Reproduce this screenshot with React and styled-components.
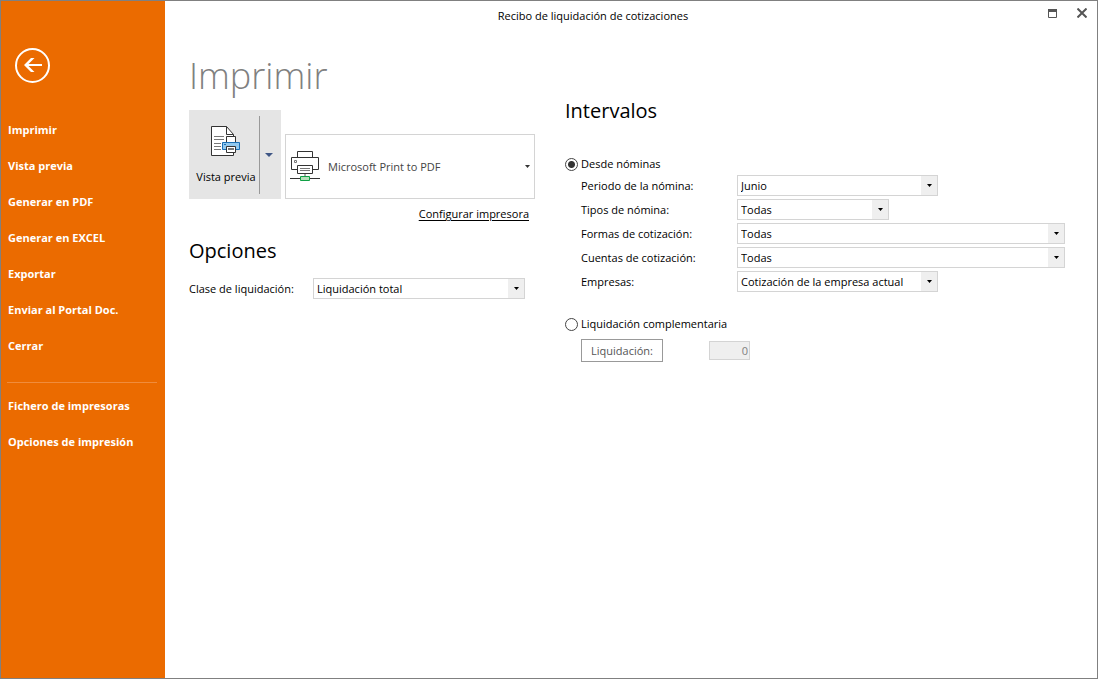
import React, { useState } from 'react';
import styled, { createGlobalStyle } from 'styled-components';

const GlobalStyle = createGlobalStyle`
  * {
    box-sizing: border-box;
  }

  body {
    margin: 0;
    background-color: #ffffff;
  }

  body, button, input, select {
    font-family: 'Open Sans', 'Noto Sans', sans-serif;
    font-size: 11px;
    line-height: 16px;
    color: #000000;
  }
`;

const Window = styled.div`
  display: flex;
  min-height: 100vh;
  border: 1px solid #808080;
`;

const Sidebar = styled.nav`
  flex: 0 0 164px;
  display: flex;
  flex-direction: column;
  align-items: stretch;
  padding: 47px 8px 0 6px;
  background-color: #eb6b00;
`;

const BackButton = styled.button`
  width: 36px;
  height: 36px;
  margin: 0 0 28px 8px;
  padding: 0;
  border: none;
  background: none;
  cursor: pointer;

  svg {
    display: block;
  }
`;

const MenuItem = styled.button`
  height: 36px;
  padding: 0 1px;
  border: none;
  background: none;
  color: #ffffff;
  font-weight: 700;
  text-align: left;
  white-space: nowrap;
  cursor: pointer;
`;

const MenuDivider = styled.hr`
  width: 100%;
  margin: 18px 0 5px;
  border: none;
  border-top: 1px solid #f08c3c;
`;

const Main = styled.div`
  flex: 1;
  min-width: 0;
  display: flex;
  flex-direction: column;
`;

const TitleBar = styled.header`
  display: grid;
  grid-template-columns: 1fr 76px;
  align-items: center;
  height: 28px;
`;

const WindowTitle = styled.div`
  padding: 2px 0 0;
  text-align: center;
`;

const WindowActions = styled.div`
  display: flex;
  justify-content: flex-end;
  gap: 10px;
  padding-right: 5px;
`;

const WindowButton = styled.button`
  display: flex;
  align-items: center;
  justify-content: center;
  width: 20px;
  height: 20px;
  padding: 0 0 4px;
  border: none;
  background: none;
`;

const Content = styled.main`
  display: grid;
  grid-template-columns: 346px minmax(0, 500px);
  gap: 30px;
  padding: 22px 24px;
`;

const Column = styled.section`
  padding-top: ${props => props.$offset || 0}px;
`;

const PageTitle = styled.h1`
  margin: 0 0 9px;
  color: #808080;
  font-size: 36px;
  font-weight: 300;
  line-height: 50px;
`;

const SectionTitle = styled.h2`
  margin: 0 0 ${props => props.$gap}px;
  font-size: 20px;
  font-weight: 400;
  line-height: 28px;
`;

const PrintTools = styled.div`
  display: flex;
  align-items: flex-end;
  gap: 4px;
`;

const PreviewGroup = styled.div`
  display: flex;
  align-items: center;
  width: 92px;
  height: 89px;
  background-color: #e5e5e5;
`;

const PreviewButton = styled.button`
  display: flex;
  flex-direction: column;
  align-items: center;
  justify-content: space-between;
  width: 71px;
  height: 78px;
  padding: 10px 0 9px 4px;
  border: none;
  border-right: 1px solid #999999;
  background: none;
  white-space: nowrap;
`;

const PreviewMenuButton = styled.button`
  flex: 1;
  display: flex;
  align-items: center;
  justify-content: center;
  height: 78px;
  padding: 0 4px 0 0;
  border: none;
  background: none;
`;

const PrinterBox = styled.div`
  flex: 1;
  display: flex;
  align-items: center;
  height: 65px;
  padding-left: 4px;
  border: 1px solid #d4d4d4;
`;

const PrinterSelectBox = styled.div`
  flex: 1;
  display: grid;
  align-items: center;

  svg {
    grid-area: 1 / 1;
    justify-self: end;
    margin-right: 4px;
    pointer-events: none;
  }
`;

const PrinterSelect = styled.select`
  grid-area: 1 / 1;
  appearance: none;
  height: 60px;
  padding: 0 20px 0 8px;
  border: none;
  background: none;
  color: #444444;
`;

const SetupLink = styled.a`
  display: block;
  width: max-content;
  margin: 7px 6px 15px auto;
  color: #000000;
  text-decoration: underline;
  text-underline-offset: 2px;
`;

const FieldRow = styled.div`
  display: grid;
  grid-template-columns: ${props => props.$labelWidth}px 1fr;
  align-items: center;
  margin-bottom: 3px;
`;

const SelectBox = styled.div`
  display: grid;
  width: ${props => props.$width || '100%'};
  height: 21px;
  border: 1px solid #d4d4d4;
`;

const Select = styled.select`
  grid-area: 1 / 1;
  appearance: none;
  width: 100%;
  padding: 0 20px 0 3px;
  border: none;
  border-radius: 0;
  background-color: #ffffff;
`;

const SelectArrow = styled.span`
  grid-area: 1 / 1;
  justify-self: end;
  display: flex;
  align-items: center;
  justify-content: center;
  width: 16px;
  background-color: #efefef;
  pointer-events: none;
`;

const RadioLabel = styled.label`
  display: flex;
  align-items: center;
  gap: 3px;
  height: 16px;
`;

const Radio = styled.input`
  appearance: none;
  width: 13px;
  height: 13px;
  margin: 0;
  border: 1px solid #444444;
  border-radius: 50%;

  &:checked {
    background: radial-gradient(circle, #333333 0 3px, #ffffff 4px);
  }
`;

const RadioFields = styled.div`
  padding: 3px 0 0 16px;
  margin-bottom: ${props => props.$gap || 0}px;
`;

const SettlementRow = styled.div`
  display: flex;
  align-items: center;
  gap: 46px;
  padding: 4px 0 0;
`;

const SettlementButton = styled.button`
  width: 82px;
  height: 23px;
  padding: 0;
  border: 1px solid #999999;
  background-color: #ffffff;
  color: #555555;
`;

const SettlementInput = styled.input`
  width: 41px;
  height: 19px;
  padding: 0 1px;
  border: 1px solid #d4d4d4;
  background-color: #efefef;
  color: #808080;
  text-align: right;
`;

const mainActions = [
  'Imprimir',
  'Vista previa',
  'Generar en PDF',
  'Generar en EXCEL',
  'Exportar',
  'Enviar al Portal Doc.',
  'Cerrar'
];

const setupActions = ['Fichero de impresoras', 'Opciones de impresión'];

const payrollFields = [
  { id: 'periodo', label: 'Periodo de la nómina:', value: 'Junio', width: '201px' },
  { id: 'tipos', label: 'Tipos de nómina:', value: 'Todas', width: '152px' },
  { id: 'formas', label: 'Formas de cotización:', value: 'Todas' },
  { id: 'cuentas', label: 'Cuentas de cotización:', value: 'Todas' },
  { id: 'empresas', label: 'Empresas:', value: 'Cotización de la empresa actual', width: '201px' }
];

const DownArrow = ({ color = '#000000', width = 5, height = 3 }) => (
  <svg width={width} height={height} viewBox={`0 0 ${width} ${height}`} aria-hidden="true">
    <path d={`M0 0H${width}L${width / 2} ${height}Z`} fill={color} />
  </svg>
);

const BackIcon = () => (
  <svg width="36" height="36" viewBox="0 0 36 36" fill="none" aria-hidden="true">
    <circle cx="17.5" cy="17.5" r="16.5" stroke="#ffffff" strokeWidth="2" />
    <path d="M9 17L16 10H19.5L13.5 16H27V18H13.5L19.5 24H16Z" fill="#ffffff" />
  </svg>
);

const PreviewIcon = () => (
  <svg width="30" height="31" viewBox="0 0 30 31" fill="none" aria-hidden="true">
    <path d="M0.5 0.5H15.5L22.5 8.5V29.5H0.5Z" fill="#ffffff" stroke="#333333" />
    <path d="M15.5 0.5V8.5H22.5" stroke="#333333" />
    <path d="M3 10.5H13M3 13.5H13M3 17.5H10M3 20.5H10M3 23.5H10" stroke="#777777" />
    <path d="M15.5 17V10.5H24.5V17" fill="#ffffff" stroke="#333333" />
    <path d="M11.5 16.5H28.5V23.5H11.5Z" fill="#92c9ef" stroke="#1a6fb5" />
    <path d="M13 18.5H15" stroke="#1a6fb5" />
    <path d="M15.5 20.5H24.5V26.5H15.5Z" fill="#ffffff" stroke="#333333" />
    <path d="M17 23H23" stroke="#777777" strokeWidth="2" />
  </svg>
);

const PrinterIcon = () => (
  <svg width="30" height="31" viewBox="0 0 30 31" fill="none" aria-hidden="true">
    <path d="M7.5 6V0.5H22.5V6" fill="#ffffff" stroke="#333333" />
    <path d="M7 18.5H1.5V6.5H28.5V18.5H23" stroke="#333333" />
    <path d="M4.5 9.5H6.5V11.5H4.5Z" stroke="#777777" />
    <path d="M7.5 14.5H22.5V22.5H7.5Z" fill="#ffffff" stroke="#333333" />
    <path d="M10 17.5H20M10 19.5H20" stroke="#777777" />
    <path d="M15 23V25" stroke="#aaaaaa" strokeWidth="2" />
    <path d="M0 27.5H30" stroke="#333333" />
    <path d="M10.5 25.5H19.5V29.5H10.5Z" fill="#b5dfb9" stroke="#10a045" />
  </svg>
);

const SelectField = ({ id, label, value, width, labelWidth }) => (
  <FieldRow $labelWidth={labelWidth}>
    <label htmlFor={id}>{label}</label>
    <SelectBox $width={width}>
      <Select id={id} defaultValue={value}>
        <option>{value}</option>
      </Select>
      <SelectArrow>
        <DownArrow />
      </SelectArrow>
    </SelectBox>
  </FieldRow>
);

const App = () => {
  const [range, setRange] = useState('nominas');

  return (
    <>
      <GlobalStyle />
      <Window>
        <Sidebar>
          <BackButton aria-label="Volver">
            <BackIcon />
          </BackButton>
          {mainActions.map(action => (
            <MenuItem key={action}>{action}</MenuItem>
          ))}
          <MenuDivider />
          {setupActions.map(action => (
            <MenuItem key={action}>{action}</MenuItem>
          ))}
        </Sidebar>

        <Main>
          <TitleBar>
            <WindowTitle>Recibo de liquidación de cotizaciones</WindowTitle>
            <WindowActions>
              <WindowButton aria-label="Maximizar">
                <svg width="9" height="9" viewBox="0 0 9 9" fill="none">
                  <path d="M0.5 0.5H8.5V8.5H0.5Z" stroke="#555555" />
                  <path d="M0 1.5H9" stroke="#555555" strokeWidth="3" />
                </svg>
              </WindowButton>
              <WindowButton aria-label="Cerrar ventana">
                <svg width="10" height="10" viewBox="0 0 10 10">
                  <path d="M0.5 0.5L9.5 9.5M9.5 0.5L0.5 9.5" stroke="#555555" strokeWidth="2" />
                </svg>
              </WindowButton>
            </WindowActions>
          </TitleBar>

          <Content>
            <Column>
              <PageTitle>Imprimir</PageTitle>
              <PrintTools>
                <PreviewGroup>
                  <PreviewButton>
                    <PreviewIcon />
                    Vista previa
                  </PreviewButton>
                  <PreviewMenuButton aria-label="Más opciones de vista previa">
                    <DownArrow color="#3f5685" width={8} height={4} />
                  </PreviewMenuButton>
                </PreviewGroup>
                <PrinterBox>
                  <PrinterIcon />
                  <PrinterSelectBox>
                    <PrinterSelect aria-label="Impresora">
                      <option>Microsoft Print to PDF</option>
                    </PrinterSelect>
                    <DownArrow color="#333333" />
                  </PrinterSelectBox>
                </PrinterBox>
              </PrintTools>
              <SetupLink href="#configurar">Configurar impresora</SetupLink>

              <SectionTitle $gap={13}>Opciones</SectionTitle>
              <SelectField
                id="clase"
                label="Clase de liquidación:"
                value="Liquidación total"
                width="212px"
                labelWidth={124}
              />
            </Column>

            <Column $offset={46}>
              <SectionTitle $gap={31}>Intervalos</SectionTitle>
              <RadioLabel>
                <Radio
                  type="radio"
                  name="range"
                  checked={range === 'nominas'}
                  onChange={() => setRange('nominas')}
                />
                Desde nóminas
              </RadioLabel>
              <RadioFields $gap={24}>
                {payrollFields.map(field => (
                  <SelectField key={field.id} labelWidth={156} {...field} />
                ))}
              </RadioFields>
              <RadioLabel>
                <Radio
                  type="radio"
                  name="range"
                  checked={range === 'complementaria'}
                  onChange={() => setRange('complementaria')}
                />
                Liquidación complementaria
              </RadioLabel>
              <RadioFields>
                <SettlementRow>
                  <SettlementButton disabled={range === 'nominas'}>Liquidación:</SettlementButton>
                  <SettlementInput
                    aria-label="Liquidación"
                    defaultValue="0"
                    disabled={range === 'nominas'}
                  />
                </SettlementRow>
              </RadioFields>
            </Column>
          </Content>
        </Main>
      </Window>
    </>
  );
};

export default App;
